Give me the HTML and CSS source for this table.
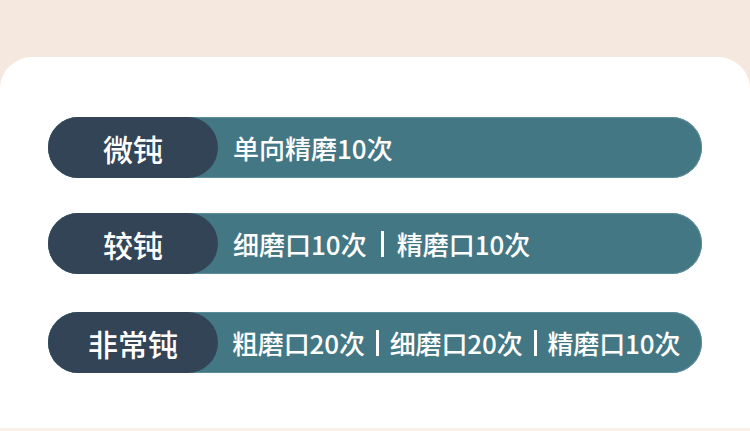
FILE: index.html
```html
<!DOCTYPE html>
<html lang="zh-CN">
<head>
<meta charset="utf-8">
<link rel="stylesheet" href="styles.css">
</head>
<body>
<div class="card">
  <div class="row row-1">
    <div class="label">微钝</div>
    <div class="desc">单向精磨10次</div>
  </div>
  <div class="row row-2">
    <div class="label">较钝</div>
    <div class="desc">细磨口10次<span class="sep"></span>精磨口10次</div>
  </div>
  <div class="row row-3">
    <div class="label">非常钝</div>
    <div class="desc desc-tight">粗磨口20次<span class="sep"></span>细磨口20次<span class="sep"></span>精磨口10次</div>
  </div>
</div>
<div class="footer-line"></div>
</body>
</html>
```
FILE: styles.css
```css
html, body {
  margin: 0;
  padding: 0;
}
body {
  width: 750px;
  height: 431px;
  background: #f5e8df;
  font-family: "Noto Sans CJK SC", "Noto Sans", sans-serif;
  overflow: hidden;
}
.card {
  margin-top: 57px;
  height: 371px;
  background: #ffffff;
  border-radius: 32px 32px 0 0;
  padding: 60px 48px 0 48px;
  box-sizing: border-box;
  display: flex;
  flex-direction: column;
}
.footer-line {
  height: 3px;
  background: #fcf1e9;
}
.row {
  height: 61px;
  border-radius: 31px;
  background: #447784;
  box-shadow: inset 0 0 0 1px #5a8c98;
  display: flex;
  align-items: center;
  color: #ffffff;
}
.row-2 { margin-top: 35px; }
.row-3 { margin-top: 38px; }
.label {
  width: 170px;
  height: 61px;
  border-radius: 31px;
  background: #344457;
  display: flex;
  align-items: center;
  justify-content: center;
  font-size: 30px;
  font-weight: 500;
  flex-shrink: 0;
}
.desc {
  margin-left: 15px;
  font-size: 26px;
  font-weight: 500;
  display: flex;
  align-items: center;
  white-space: nowrap;
}
.sep {
  display: inline-block;
  width: 3px;
  height: 26px;
  background: #ffffff;
  margin: 0 13px 0 14px;
}
.desc-tight {
  margin-left: 14px;
  letter-spacing: -0.15px;
}
.desc-tight .sep {
  margin: 0 11px 0 11px;
}
```
